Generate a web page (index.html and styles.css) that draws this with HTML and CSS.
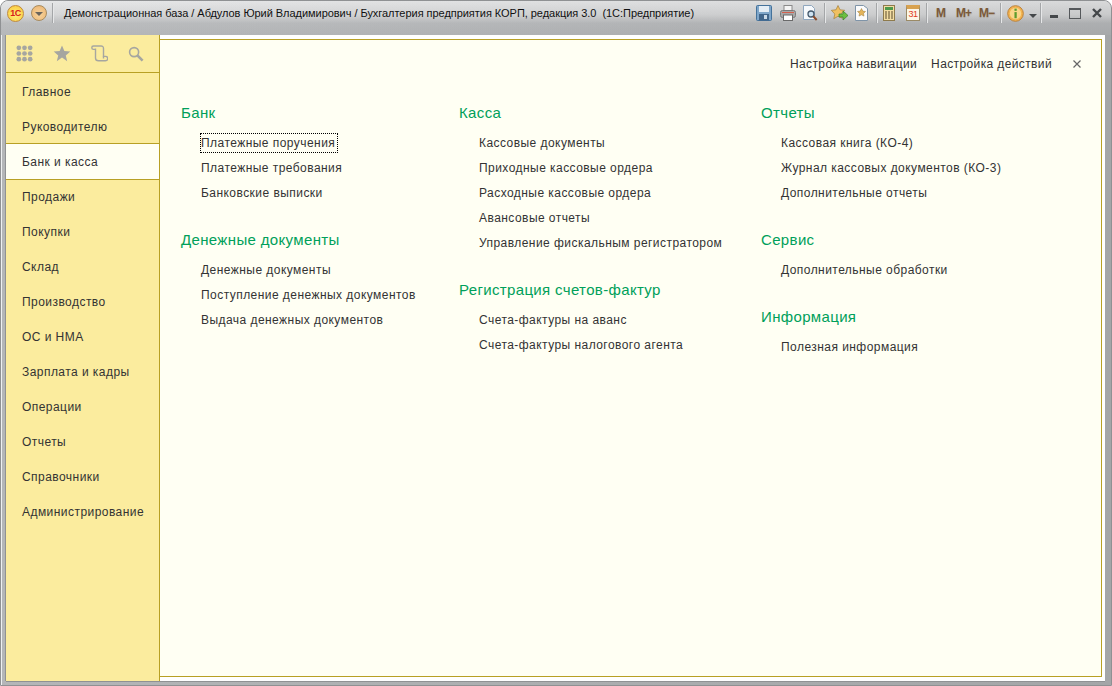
FILE: index.html
```html
<!DOCTYPE html>
<html lang="ru">
<head>
    <meta charset="UTF-8">
    <meta name="viewport" content="width=device-width, initial-scale=1.0">
    <title>Банк и касса</title>
    <link rel="stylesheet" href="styles.css">
</head>
<body>
<div class="window">
    <!-- заголовок окна -->
    <div class="titlebar">
        <div class="logo">1С</div>
        <div class="menu-btn"><span class="menu-arrow"></span></div>
        <div class="sep sep-first"></div>
        <div class="title">Демонстрационная база / Абдулов Юрий Владимирович / Бухгалтерия предприятия КОРП, редакция 3.0  (1С:Предприятие)</div>
        <div class="tools">
            <svg class="t-save" width="16" height="16" viewBox="0 0 16 16"><rect x=".5" y=".5" width="15" height="15" rx="1" fill="#7fa6c9" stroke="#44729b"/><rect x="3" y="1" width="10" height="6" fill="#e4edf5"/><rect x="3" y="9" width="10" height="6.500" fill="#41658a"/><rect x="8" y="10" width="3" height="4" fill="#c9d8e6"/></svg>
            <svg class="t-print" width="16" height="16" viewBox="0 0 16 16"><rect x="4" y=".5" width="8" height="6" fill="#f4f4f4" stroke="#8a8a8a"/><rect x=".5" y="5.500" width="15" height="7" rx="2" fill="#a8a8a8" stroke="#7a7a7a"/><rect x="3.500" y="10" width="9" height="5.500" fill="#fff" stroke="#6a6a6a"/><rect x="2" y="7" width="12" height="1" fill="#d4604e"/></svg>
            <svg class="t-preview" width="16" height="16" viewBox="0 0 16 16"><path d="M1.500.5h8l3 3v11h-11z" fill="#f6f9fc" stroke="#8fa7be"/><circle cx="9" cy="9" r="3" fill="#cfe3f2" stroke="#44586b" stroke-width="1.300"/><path d="M11.300 11.300l3.400 3.700" stroke="#8a4a2a" stroke-width="2"/></svg>
            <div class="sep t-sep1"></div>
            <svg class="t-star" width="18" height="16" viewBox="0 0 18 16"><path d="M7 .5l2 4.300 4.700.5-3.500 3.200 1 4.700L7 11.300l-4.200 2.400 1-4.700L.3 5.300 5 4.800z" fill="#f0c060" stroke="#a5803a" stroke-width=".7"/><path d="M8 9h4V6l5 4.500L12 15v-3H8z" fill="#6cbf3f" stroke="#3c7f25" stroke-width=".7"/></svg>
            <svg class="t-doc" width="13" height="16" viewBox="0 0 13 16"><path d="M.5.500h8l4 3v12H.5z" fill="#fbfbfb" stroke="#7f94a8"/><path d="M6.500 3.500l1.300 2.600 2.700.4-2 1.900.5 2.700-2.500-1.300L4 11.100l.5-2.700-2-1.900 2.700-.4z" fill="#e4b45a" stroke="#9c7b3a" stroke-width=".5"/></svg>
            <div class="sep t-sep2"></div>
            <svg class="t-calc" width="12" height="16" viewBox="0 0 12 16"><rect x=".5" y=".5" width="11" height="15" fill="#f2dca2" stroke="#8e7a4c"/><rect x="2" y="2" width="8" height="3" fill="#4e9a4a"/><path d="M2 7h2M5 7h2M8 7h2M2 9h2M5 9h2M8 9h2M2 11h2M5 11h2M8 11h2M2 13h2M5 13h2M8 13h2" stroke="#5b4a2c"/></svg>
            <div class="calendar"><span class="cal-num">31</span></div>
            <div class="sep t-sep3"></div>
            <span class="mem mem-m">M</span>
            <span class="mem mem-plus">M+</span>
            <span class="mem mem-minus">M−</span>
            <div class="sep t-sep4"></div>
            <svg class="t-info" width="17" height="17" viewBox="0 0 18 18"><circle cx="9" cy="9" r="8.300" fill="#f2b24e" stroke="#b9803a"/><circle cx="9" cy="9" r="6" fill="#fbd68a"/><rect x="7.900" y="7.500" width="2.400" height="6.500" fill="#5f9c2d"/><rect x="7.900" y="3.800" width="2.400" height="2.400" fill="#5f9c2d"/></svg>
            <span class="info-arrow"></span>
            <div class="sep t-sep5"></div>
            <svg class="t-min" width="8" height="12" viewBox="0 0 8 12"><rect x="0" y="8" width="8" height="3" fill="#44474a"/></svg>
            <svg class="t-max" width="12" height="11" viewBox="0 0 12 11"><rect x=".5" y=".5" width="11" height="10" fill="none" stroke="#55585b"/><rect x="0" y="0" width="12" height="2" fill="#55585b"/></svg>
            <svg class="t-close" width="10" height="10" viewBox="0 0 10 10"><path d="M1 1l8 8M9 1L1 9" stroke="#44474a" stroke-width="2.400"/></svg>
        </div>
    </div>

    <div class="workspace">
        <!-- панель разделов -->
        <div class="sidebar">
            <div class="side-tools">
                <svg width="17" height="17" viewBox="0 0 18 18" fill="#a6a6a0"><circle cx="3" cy="3" r="2.500"/><circle cx="9" cy="3" r="2.500"/><circle cx="15" cy="3" r="2.500"/><circle cx="3" cy="9" r="2.500"/><circle cx="9" cy="9" r="2.500"/><circle cx="15" cy="9" r="2.500"/><circle cx="3" cy="15" r="2.500"/><circle cx="9" cy="15" r="2.500"/><circle cx="15" cy="15" r="2.500"/></svg>
                <svg width="18" height="17" viewBox="0 0 18 18"><path d="M9 .5l2.500 5.900 6.300.5-4.800 4.100 1.500 6.200L9 13.300l-5.500 3.900L5 11 .2 6.900l6.300-.5z" fill="#a6a6a0"/></svg>
                <svg width="17" height="17" viewBox="0 0 17 17" fill="none" stroke="#a6a6a0" stroke-width="1.400"><path d="M4.500 3.500V13Q4.500 15.800 7.500 15.800H14.500A2.200 2.200 0 0 0 14.500 11.400H12.500V3.500Q12.500 1 10 1H2.500A1.700 1.700 0 0 0 2.500 4.400H4.500"/><path d="M12.500 11.400V13.500"/></svg>
                <svg width="16" height="16" viewBox="0 0 17 17" fill="none" stroke="#a6a6a0"><circle cx="6.500" cy="6.500" r="4.800" stroke-width="1.700"/><path d="M10 10l5.500 5.500" stroke-width="2.800"/></svg>
            </div>
            <div class="nav-item">Главное</div>
            <div class="nav-item">Руководителю</div>
            <div class="nav-item active">Банк и касса</div>
            <div class="nav-item">Продажи</div>
            <div class="nav-item">Покупки</div>
            <div class="nav-item">Склад</div>
            <div class="nav-item">Производство</div>
            <div class="nav-item">ОС и НМА</div>
            <div class="nav-item">Зарплата и кадры</div>
            <div class="nav-item">Операции</div>
            <div class="nav-item">Отчеты</div>
            <div class="nav-item">Справочники</div>
            <div class="nav-item">Администрирование</div>
        </div>

        <div class="content-wrap">
            <div class="content">
                <div class="top-links">
                    <span class="top-link">Настройка навигации</span>
                    <span class="top-link">Настройка действий</span>
                    <svg class="close-x" width="8" height="8" viewBox="0 0 8 8"><path d="M.5.500l7 7M7.500.500l-7 7" stroke="#666" stroke-width="1.200"/></svg>
                </div>
                <div class="columns">
                    <div class="col col1">
                        <div class="group">
                            <div class="group-title">Банк</div>
                            <div class="link focused">Платежные поручения</div>
                            <div class="link">Платежные требования</div>
                            <div class="link">Банковские выписки</div>
                        </div>
                        <div class="group">
                            <div class="group-title">Денежные документы</div>
                            <div class="link">Денежные документы</div>
                            <div class="link">Поступление денежных документов</div>
                            <div class="link">Выдача денежных документов</div>
                        </div>
                    </div>
                    <div class="col col2">
                        <div class="group">
                            <div class="group-title">Касса</div>
                            <div class="link">Кассовые документы</div>
                            <div class="link">Приходные кассовые ордера</div>
                            <div class="link">Расходные кассовые ордера</div>
                            <div class="link">Авансовые отчеты</div>
                            <div class="link">Управление фискальным регистратором</div>
                        </div>
                        <div class="group">
                            <div class="group-title">Регистрация счетов-фактур</div>
                            <div class="link">Счета-фактуры на аванс</div>
                            <div class="link">Счета-фактуры налогового агента</div>
                        </div>
                    </div>
                    <div class="col">
                        <div class="group">
                            <div class="group-title">Отчеты</div>
                            <div class="link">Кассовая книга (КО-4)</div>
                            <div class="link">Журнал кассовых документов (КО-3)</div>
                            <div class="link">Дополнительные отчеты</div>
                        </div>
                        <div class="group">
                            <div class="group-title">Сервис</div>
                            <div class="link">Дополнительные обработки</div>
                        </div>
                        <div class="group">
                            <div class="group-title">Информация</div>
                            <div class="link">Полезная информация</div>
                        </div>
                    </div>
                </div>
            </div>
        </div>
    </div>
</div>
</body>
</html>
```

FILE: styles.css
```css
* { box-sizing: border-box; }
html, body {
    margin: 0;
    height: 100%;
    background: #fff;
    overflow: hidden;
}
body {
    font-family: "Liberation Sans", Arial, sans-serif;
    font-size: 12px;
    color: #333;
}

/* окно */
.window {
    width: 1112px;
    height: 686px;
    display: flex;
    flex-direction: column;
    border-radius: 8px 8px 0 0;
    border: 1px solid #8f9193;
    background: linear-gradient(to right, #b4b6b8 0, #a4a6a8 100%);
    box-shadow: inset 1px 1px 0 #eef0f1;
}

/* заголовок */
.titlebar {
    height: 34px;
    flex: none;
    display: flex;
    align-items: center;
    padding: 0 0 10px 6px;
    border-radius: 7px 7px 0 0;
    background:
        linear-gradient(to right, rgba(255,255,255,.08) 0, rgba(0,0,0,.05) 100%),
        linear-gradient(to bottom, #e4e5e6 0, #d3d4d5 40%, #b6b8ba 65%, #b0b2b4 100%);
}
.logo {
    flex: none;
    width: 17px;
    height: 17px;
    border-radius: 50%;
    background: radial-gradient(circle at 50% 60%, #fff07a 0, #fbd24a 70%, #eda63c 100%);
    border: 1px solid #c08a3c;
    color: #d8201a;
    font-size: 9px;
    font-weight: bold;
    line-height: 15px;
    text-align: center;
    letter-spacing: -0.5px;
}
.menu-btn {
    flex: none;
    width: 16px;
    height: 16px;
    margin-left: 7px;
    border-radius: 50%;
    background: radial-gradient(circle at 50% 60%, #f7d39c 0, #efbd7d 70%, #dfa15c 100%);
    border: 1px solid #a88b5e;
    display: flex;
    align-items: center;
    justify-content: center;
}
.menu-arrow {
    width: 0;
    height: 0;
    margin-top: 1px;
    border-left: 4px solid transparent;
    border-right: 4px solid transparent;
    border-top: 4px solid #6b655c;
}
.sep {
    flex: none;
    width: 2px;
    height: 20px;
    background: #a4a6a8;
    border-right: 1px solid #e6e7e8;
}
.sep-first { margin: 0 10px 0 5px; }
.title {
    flex: none;
    width: 630px;
    color: #111;
    font-size: 11px;
    letter-spacing: -0.04px;
    white-space: pre;
}

/* кнопки справа, отступы подобраны по снимку */
.tools {
    margin-left: auto;
    display: flex;
    align-items: center;
    height: 20px;
    padding-right: 9px;
}
.tools svg { flex: none; }
.t-print { margin-left: 8px; }
.t-preview { margin-left: 6px; }
.t-sep1 { margin-left: 6px; }
.t-star { margin-left: 5px; }
.t-doc { margin-left: 6px; }
.t-sep2 { margin-left: 8px; }
.t-calc { margin-left: 5px; }
.t-sep3 { margin-left: 6px; }
.t-sep4 { margin-left: 6px; }
.t-info { margin-left: 5px; }
.t-sep5 { margin-left: 3px; }
.t-min { margin-left: 8px; }
.t-max { margin-left: 11px; }
.t-close { margin-left: 11px; }
.calendar {
    flex: none;
    width: 14px;
    height: 16px;
    margin-left: 11px;
    border: 1px solid #9a8a66;
    border-top: 4px solid #d8a250;
    background: #fdf6e6;
    text-align: center;
}
.cal-num {
    display: block;
    color: #e03a1c;
    font-size: 9px;
    line-height: 11px;
    letter-spacing: -0.5px;
}
.mem {
    flex: none;
    color: #7b5a3a;
    font-size: 12px;
    font-weight: bold;
    letter-spacing: -1px;
    text-shadow: 0 1px 1px rgba(120,80,40,.3);
}
.mem-m { margin-left: 8px; }
.mem-plus { margin-left: 11px; }
.mem-minus { margin-left: 8px; }
.info-arrow {
    flex: none;
    width: 0;
    height: 0;
    margin: 5px 0 0 5px;
    border-left: 4px solid transparent;
    border-right: 4px solid transparent;
    border-top: 4px solid #44474a;
}

/* рабочая область */
.workspace {
    flex: 1;
    min-height: 0;
    display: flex;
    margin: 0 6px 4px 5px;
    box-shadow: 0 1px 0 #8f9193, -1px 0 0 #8f9193;
}
.sidebar {
    width: 154px;
    flex: none;
    background: #fbec9e;
    border-right: 1px solid #b8a024;
}
.side-tools {
    height: 38px;
    display: flex;
    align-items: center;
    gap: 20px;
    padding-left: 10px;
    border-bottom: 1px solid #b8a024;
}
.nav-item {
    height: 35px;
    padding: 12px 0 0 16px;
    letter-spacing: 0.45px;
    line-height: 15px;
}
.nav-item.active {
    position: relative;
    background: #fffff3;
    border-top: 1px solid #b8a024;
    border-bottom: 1px solid #b8a024;
    height: 37px;
    padding-top: 11px;
    margin-bottom: -2px;
}

.content-wrap {
    flex: 1;
    min-width: 0;
    background: #fff;
    padding: 4px 3px 4px 0;
}
.content {
    height: 100%;
    background: #fffff3;
    border: 1px solid #b8a024;
    border-left: none;
    padding: 0 0 0 21px;
}
.top-links {
    height: 46px;
    display: flex;
    align-items: center;
    justify-content: flex-end;
    padding: 0 20px 0 0;
    margin-top: 1px;
}
.top-link {
    margin-right: 14px;
    letter-spacing: 0.38px;
}
.close-x { margin-left: 7px; }

.columns {
    display: flex;
    padding-top: 8px;
}
.col1 { width: 278px; }
.col2 { width: 302px; }
.group { margin-bottom: 17px; }
.group-title {
    color: #00a05a;
    font-size: 15px;
    line-height: 18px;
    height: 35px;
    padding-top: 9px;
    letter-spacing: 0.35px;
}
.link {
    height: 25px;
    line-height: 15px;
    padding: 6px 0 0 20px;
    letter-spacing: 0.45px;
    white-space: nowrap;
}
/* рамка фокуса на первой ссылке */
.focused { position: relative; }
.focused::before {
    content: "";
    position: absolute;
    left: 19px;
    top: 3px;
    width: 136px;
    height: 18px;
    border: 1px dotted #000;
}
```
